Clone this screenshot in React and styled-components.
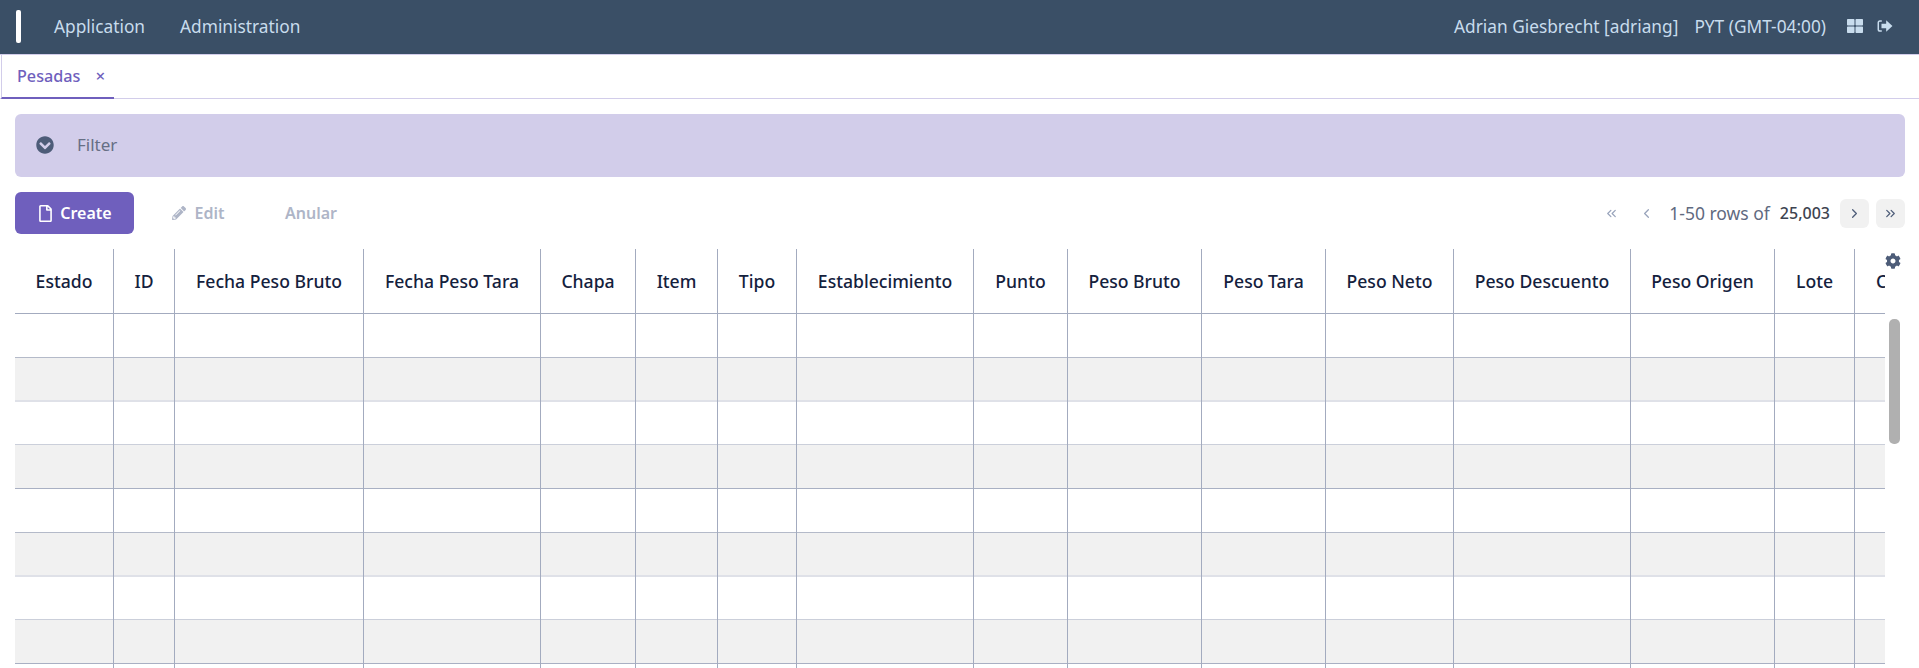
import React from 'react';
import styled, { createGlobalStyle } from 'styled-components';
import { ChevronLeft, ChevronRight, ChevronsLeft, ChevronsRight } from 'lucide-react';
import { FaChevronCircleDown, FaCog, FaPencilAlt, FaRegFile, FaThLarge } from 'react-icons/fa';

const GlobalStyle = createGlobalStyle`
  html, body {
    margin: 0;
    height: 100%;
    overflow: hidden;
    background: #fff;
    font-family: "Noto Sans", "Open Sans", sans-serif;
  }
`;

const columns = [
  'Estado',
  'ID',
  'Fecha Peso Bruto',
  'Fecha Peso Tara',
  'Chapa',
  'Item',
  'Tipo',
  'Establecimiento',
  'Punto',
  'Peso Bruto',
  'Peso Tara',
  'Peso Neto',
  'Peso Descuento',
  'Peso Origen',
  'Lote',
  'Chofer',
];

const gridColumns = '99px 61px 189px 177px 95px 82px 79px 177px 94px 134px 124px 128px 177px 144px 80px 100px';

// the row lines of the reference fall on fractions of a pixel, so they repeat every 4 rows
const rowLines = [
  { width: 1, color: '#b4bac9' },
  { width: 2, color: '#dfe1e8' },
  { width: 1, color: '#cbcfda' },
  { width: 1, color: '#a9b0c3' },
];

const Page = styled.div`
  height: 668px;
  display: flex;
  flex-direction: column;
  overflow: hidden;
`;

const TopBar = styled.header`
  height: 54px;
  flex: none;
  display: flex;
  align-items: center;
  padding: 0 26px 2px 16px;
  background: #3a4f66;
  color: #c8dced;
  font-size: 17.3px;
  box-sizing: border-box;
`;

const Logo = styled.div`
  width: 5px;
  height: 33px;
  border-radius: 2px;
  background: #fff;
  margin-right: 33px;
`;

const MenuItem = styled.a`
  margin-right: 35px;
`;

const UserArea = styled.div`
  margin-left: auto;
  display: flex;
  align-items: center;
`;

const UserText = styled.span`
  margin-right: ${(props) => props.$gap}px;
`;

const TopIcon = styled.span`
  display: flex;
  margin-left: ${(props) => props.$gap || 0}px;
  font-size: 16px;
`;

const TabBar = styled.nav`
  height: 45px;
  flex: none;
  display: flex;
  box-sizing: border-box;
  border-top: 1px solid #d2cdea;
  border-bottom: 1px solid #d2cdea;
`;

const Tab = styled.div`
  width: 113px;
  margin-left: 1px;
  margin-bottom: -1px;
  box-sizing: border-box;
  display: flex;
  align-items: center;
  padding: 0 0 1px 15px;
  border-left: 1px solid #d2cdea;
  border-bottom: 2px solid #6f5fbd;
  color: #6f5fbd;
  font-size: 16.2px;
  font-weight: 500;
`;

const TabClose = styled.span`
  margin-left: 15px;
  font-size: 17px;
  line-height: 1;
`;

const Content = styled.main`
  flex: 1;
  min-height: 0;
  padding: 15px 14px 0 15px;
  display: flex;
  flex-direction: column;
`;

const FilterBar = styled.div`
  height: 63px;
  flex: none;
  display: flex;
  align-items: center;
  box-sizing: border-box;
  padding: 0 0 2px 21px;
  border-radius: 6px;
  background: #d2cdea;
  color: #666f85;
  font-size: 17px;
`;

const FilterIcon = styled.span`
  display: flex;
  margin-right: 23px;
  font-size: 18px;
  color: #4d5c78;
`;

const ToolBar = styled.div`
  height: 42px;
  flex: none;
  margin-top: 15px;
  display: flex;
  align-items: center;
`;

const ActionButton = styled.button`
  height: 42px;
  width: ${(props) => props.$width}px;
  margin-right: ${(props) => props.$gap || 0}px;
  padding: 0;
  display: flex;
  align-items: center;
  justify-content: center;
  gap: ${(props) => (props.$primary ? 6 : 9)}px;
  border: 0;
  border-radius: 6px;
  background: ${(props) => (props.$primary ? '#6f5fbd' : 'transparent')};
  color: ${(props) => (props.$primary ? '#fff' : '#aeb5c7')};
  font-family: inherit;
  font-size: 16px;
  font-weight: 600;
`;

const Pager = styled.div`
  margin-left: auto;
  display: flex;
  align-items: center;
  color: #5f6a80;
  font-size: 17.5px;
`;

const PagerArrow = styled.span`
  width: 29px;
  height: 29px;
  display: flex;
  align-items: center;
  justify-content: center;
  margin-left: ${(props) => props.$gap || 0}px;
  border-radius: 6px;
  background: ${(props) => (props.$enabled ? '#f1f1f1' : 'transparent')};
  color: ${(props) => (props.$enabled ? '#4d5c78' : '#98a3bb')};
`;

const RowsLabel = styled.span`
  margin-left: 8px;
`;

const RowsTotal = styled.strong`
  margin-left: 10px;
  font-size: 16px;
  font-weight: 500;
  color: #3d4350;
`;

const TableArea = styled.section`
  flex: 1;
  min-height: 0;
  margin-top: 15px;
  display: flex;
`;

const TableView = styled.div`
  width: 1870px;
  flex: none;
  overflow: hidden;
`;

const HeaderRow = styled.div`
  display: grid;
  grid-template-columns: ${gridColumns};
  height: 65px;
  box-sizing: border-box;
  border-bottom: 1px solid #a3abbf;
`;

const Row = styled.div`
  display: grid;
  grid-template-columns: ${gridColumns};
  height: 43.75px;
  box-sizing: border-box;
  border-bottom: ${(props) => props.$line.width}px solid ${(props) => props.$line.color};
  background: ${(props) => (props.$odd ? '#f1f1f1' : '#fff')};
`;

const HeadCell = styled.div`
  display: flex;
  align-items: center;
  justify-content: center;
  white-space: nowrap;
  border-right: 1px solid #a3abbf;
  color: #14213d;
  font-size: 17.6px;
  font-weight: 500;
`;

const Cell = styled.div`
  margin-bottom: -2px;
  border-right: 1px solid #a3abbf;
`;

const SideRail = styled.aside`
  flex: 1;
  display: flex;
  flex-direction: column;
  align-items: flex-start;
  padding-top: 4px;
`;

const GearIcon = styled.span`
  display: flex;
  font-size: 16px;
  color: #4d5c78;
`;

const ScrollThumb = styled.div`
  width: 11px;
  height: 125px;
  margin-top: 50px;
  margin-left: 4px;
  border-radius: 5px;
  background: #b0b0b0;
`;

function SignOutIcon() {
  return (
    <svg width="16" height="14" viewBox="0 0 15 13" fill="currentColor">
      <path d="M4.5 1H2.6C1.4 1 .5 2 .5 3.2v6.6C.5 11 1.4 12 2.6 12h1.9v-1.4H2.7c-.5 0-.8-.4-.8-.8V3.2c0-.4.3-.8.8-.8h1.8z" />
      <path d="M8.6 1.2 14.5 6.5 8.6 11.8V8.6H4.2V4.4h4.4z" />
    </svg>
  );
}

function App() {
  const rows = Array.from({ length: 9 }, (_, i) => i);

  return (
    <Page>
      <GlobalStyle />
      <TopBar>
        <Logo />
        <MenuItem>Application</MenuItem>
        <MenuItem>Administration</MenuItem>
        <UserArea>
          <UserText $gap={16}>Adrian Giesbrecht [adriang]</UserText>
          <UserText $gap={21}>PYT (GMT-04:00)</UserText>
          <TopIcon>
            <FaThLarge />
          </TopIcon>
          <TopIcon $gap={14}>
            <SignOutIcon />
          </TopIcon>
        </UserArea>
      </TopBar>

      <TabBar>
        <Tab>
          Pesadas
          <TabClose>×</TabClose>
        </Tab>
      </TabBar>

      <Content>
        <FilterBar>
          <FilterIcon>
            <FaChevronCircleDown />
          </FilterIcon>
          Filter
        </FilterBar>

        <ToolBar>
          <ActionButton $primary $width={119} $gap={15}>
            <FaRegFile size={17} />
            Create
          </ActionButton>
          <ActionButton $width={98} $gap={19}>
            <FaPencilAlt size={14} />
            Edit
          </ActionButton>
          <ActionButton $width={90}>Anular</ActionButton>
          <Pager>
            <PagerArrow>
              <ChevronsLeft size={15} />
            </PagerArrow>
            <PagerArrow $gap={6}>
              <ChevronLeft size={15} />
            </PagerArrow>
            <RowsLabel>1-50 rows of</RowsLabel>
            <RowsTotal>25,003</RowsTotal>
            <PagerArrow $enabled $gap={10}>
              <ChevronRight size={15} />
            </PagerArrow>
            <PagerArrow $enabled $gap={7}>
              <ChevronsRight size={15} />
            </PagerArrow>
          </Pager>
        </ToolBar>

        <TableArea>
          <TableView>
            <HeaderRow>
              {columns.map((name) => (
                <HeadCell key={name}>{name}</HeadCell>
              ))}
            </HeaderRow>
            {rows.map((row) => (
              <Row key={row} $odd={row % 2 === 1} $line={rowLines[row % 4]}>
                {columns.map((name) => (
                  <Cell key={name} />
                ))}
              </Row>
            ))}
          </TableView>
          <SideRail>
            <GearIcon>
              <FaCog />
            </GearIcon>
            <ScrollThumb />
          </SideRail>
        </TableArea>
      </Content>
    </Page>
  );
}

export default App;
